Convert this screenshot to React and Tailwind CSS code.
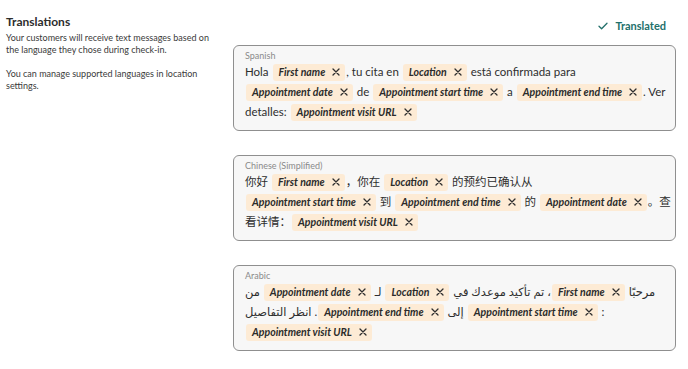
import React from 'react';

const XIcon = () => (
  <svg width="8" height="8" viewBox="0 0 8 8" fill="none" stroke="#2f2f2f" strokeWidth="1.3" strokeLinecap="round">
    <path d="M1 1l6 6M7 1L1 7" />
  </svg>
);

const Chip = ({ children }) => (
  <span
    dir="ltr"
    className="mx-[1px] inline-flex h-[17px] items-center gap-[7px] rounded-[3px] bg-[#fdebd5] pl-[6px] pr-[5px] text-[10.5px] font-bold italic leading-none text-[#2b2b2b]"
  >
    {children}
    <XIcon />
  </span>
);

function Card({ label, children, rtl }) {
  return (
    <div className="rounded-[6px] border border-[#8f8f8f] bg-[#f7f7f7] px-[11px] pt-[4px] pb-[8px]">
      <div className="text-[9px] leading-[12px] text-[#8a8a8a]">{label}</div>
      <div
        dir={rtl ? 'rtl' : 'ltr'}
        className="whitespace-nowrap text-left text-[11.5px] leading-[20px] text-[#2e2e2e]"
      >
        {children}
      </div>
    </div>
  );
}

export default function App() {
  return (
    <div
      className="flex h-[369px] w-[688px] overflow-hidden bg-white"
      style={{ fontFamily: 'Lato, "Noto Sans CJK SC", "DejaVu Sans", sans-serif' }}
    >
      {/* Left intro */}
      <div className="w-[233px] shrink-0 pl-[6px] pt-[14px] pr-[10px]">
        <h2 className="text-[12px] font-bold leading-[16px] text-[#2d2d2d]">Translations</h2>
        <p className="mt-[2px] text-[9px] leading-[12px] text-[#3a3a3a]">
          Your customers will receive text messages based on the language they chose during check-in.
        </p>
        <p className="mt-[12px] text-[9px] leading-[12px] text-[#3a3a3a]">
          You can manage supported languages in location settings.
        </p>
      </div>

      {/* Right column */}
      <div className="min-w-0 flex-1 pr-[12px]">
        <div className="mt-[19px] flex h-[14px] items-center justify-end gap-[7px] pr-[10px] text-[11px] font-bold text-[#23706b]">
          <svg width="10" height="8" viewBox="0 0 10 8" fill="none" stroke="#23706b" strokeWidth="1.3" strokeLinecap="round" strokeLinejoin="round">
            <path d="M1 4.2l2.6 2.6L9 1.2" />
          </svg>
          <span>Translated</span>
        </div>

        <div className="mt-[12px] flex flex-col gap-[24px]">
          <Card label="Spanish">
            Hola <Chip>First name</Chip>, tu cita en <Chip>Location</Chip> está confirmada para
            <br />
            <Chip>Appointment date</Chip> de <Chip>Appointment start time</Chip> a{' '}
            <Chip>Appointment end time</Chip>. Ver
            <br />
            detalles: <Chip>Appointment visit URL</Chip>
          </Card>

          <Card label="Chinese (Simplified)">
            你好 <Chip>First name</Chip>，你在 <Chip>Location</Chip> 的预约已确认从
            <br />
            <Chip>Appointment start time</Chip> 到 <Chip>Appointment end time</Chip> 的{' '}
            <Chip>Appointment date</Chip>。查
            <br />
            看详情：<Chip>Appointment visit URL</Chip>
          </Card>

          <Card label="Arabic" rtl>
            مرحبًا <Chip>First name</Chip>، تم تأكيد موعدك في <Chip>Location</Chip> لـ{' '}
            <Chip>Appointment date</Chip> من
            <br />: <Chip>Appointment start time</Chip> إلى <Chip>Appointment end time</Chip>. انظر التفاصيل
            <br />
            <Chip>Appointment visit URL</Chip>
          </Card>
        </div>
      </div>
    </div>
  );
}
